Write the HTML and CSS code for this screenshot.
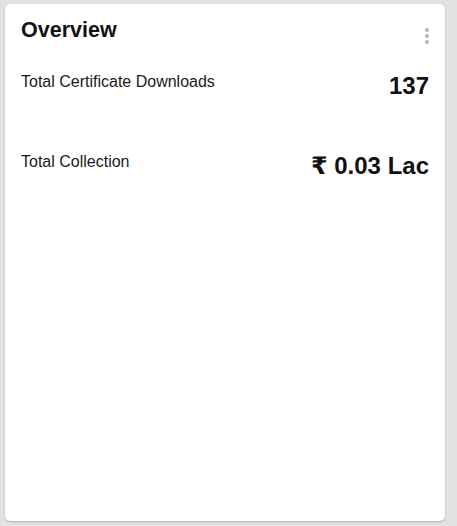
FILE: index.html
```html
<!DOCTYPE html>
<html lang="en">
<head>
<meta charset="utf-8">
<title>Overview</title>
<link rel="stylesheet" href="styles.css">
</head>
<body>
<div class="card">
  <div class="card-header">
    <h2 class="title">Overview</h2>
    <button class="more" aria-label="More options">
      <svg width="8" height="18" viewBox="0 0 8 18" aria-hidden="true">
        <circle cx="4" cy="3" r="2"/>
        <circle cx="4" cy="9" r="2"/>
        <circle cx="4" cy="15" r="2"/>
      </svg>
    </button>
  </div>
  <div class="stats">
    <div class="stat">
      <span class="label">Total Certificate Downloads</span>
      <span class="value">137</span>
    </div>
    <div class="stat">
      <span class="label">Total Collection</span>
      <span class="value">₹ 0.03 Lac</span>
    </div>
  </div>
</div>
</body>
</html>
```
FILE: styles.css
```css
html, body {
  margin: 0;
  padding: 0;
  background: #e2e2e2;
}
body {
  padding: 4px 12px 5px 5px;
  font-family: "Liberation Sans", Arial, "DejaVu Sans", sans-serif;
  color: #111;
}
.card {
  box-sizing: border-box;
  width: 440px;
  height: 517px;
  background: #fff;
  border-radius: 5px;
  box-shadow: 0 1px 2px rgba(0,0,0,0.22), 0 0 1px rgba(0,0,0,0.08);
  padding: 13px 16px 16px 16px;
}
.card-header {
  display: flex;
  justify-content: space-between;
  align-items: flex-start;
}
.title {
  margin: 0;
  font-size: 21.5px;
  line-height: 26px;
  font-weight: 700;
  color: #111;
}
.more {
  border: 0;
  background: none;
  padding: 0;
  margin: 10px -2px 0 0;
  display: flex;
  cursor: pointer;
}
.more svg {
  fill: #b3b3b3;
  display: block;
}
.stats {
  margin-top: 26.5px;
  display: grid;
  grid-auto-rows: 80px;
}
.stat {
  display: flex;
  justify-content: space-between;
  align-items: flex-start;
}
.label {
  font-size: 16px;
  line-height: 20px;
  color: #1a1a1a;
}
.value {
  font-size: 24px;
  line-height: 27px;
  font-weight: 700;
  color: #111;
}
```
